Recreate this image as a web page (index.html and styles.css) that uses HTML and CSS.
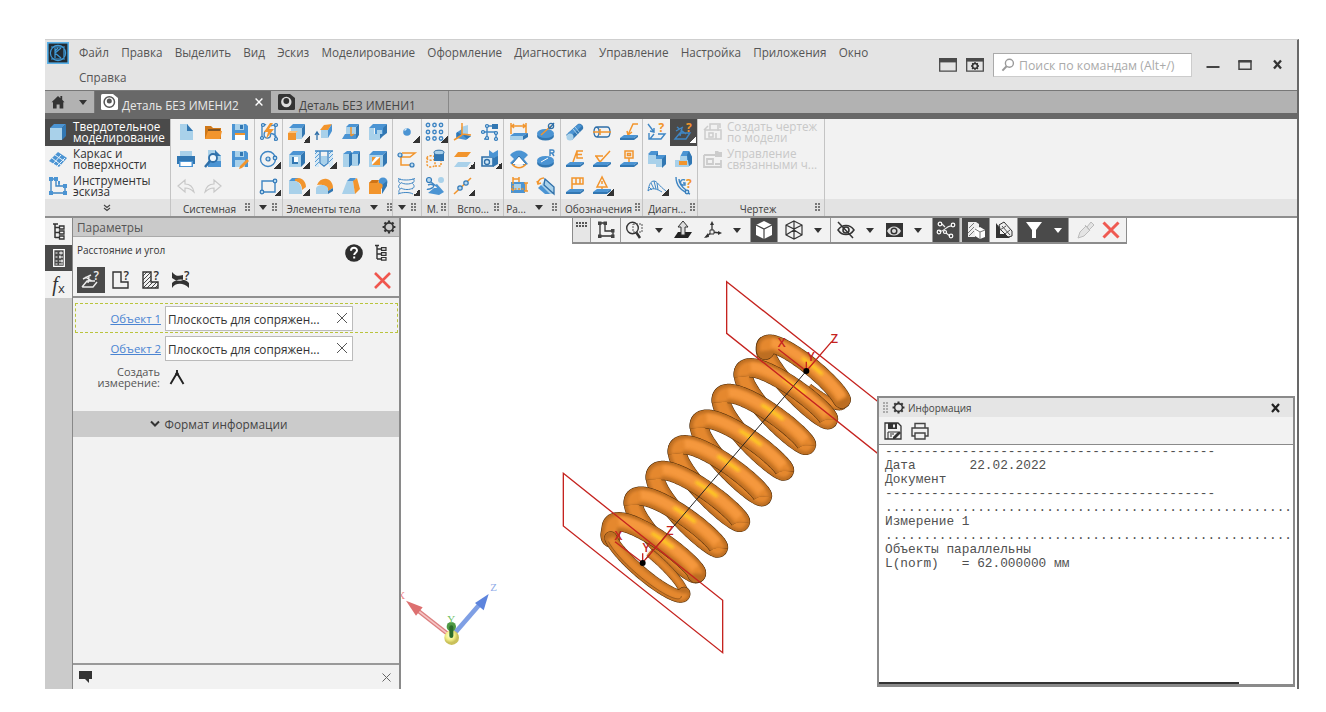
FILE: index.html
```html
<!DOCTYPE html>
<html lang="ru">
<head>
<meta charset="utf-8">
<title>Деталь БЕЗ ИМЕНИ2</title>
<link rel="stylesheet" href="styles.css">
</head>
<body>
<div class="app">
  <header class="titlebar">
    <svg class="logo" viewBox="0 0 22 22"><rect x=".8" y=".8" width="20.4" height="20.4" fill="#222b33" stroke="#58b0e8" stroke-width="1.6"/><g fill="none" stroke="#3f9ad8" stroke-width="1.2"><circle cx="11" cy="11" r="7.6"/><path d="M4 5h14M4 17h14M8 6v10M8 11l6-5M8 11l6 5M11 6l-3 3M17 7v8"/></g></svg>
    <nav class="menu"><span>Файл</span><span>Правка</span><span>Выделить</span><span>Вид</span><span>Эскиз</span><span>Моделирование</span><span>Оформление</span><span>Диагностика</span><span>Управление</span><span>Настройка</span><span>Приложения</span><span>Окно</span><span>Справка</span></nav>
    <div class="winbar">
      <svg class="lay" width="18" height="14" viewBox="0 0 18 14"><path d="M.7 .7h16.6v12.4H.7z" fill="none" stroke="#4a4a4a" stroke-width="1.3"/><path d="M0 0h18v4.4H0z" fill="#4a4a4a"/></svg>
      <svg class="cfg" width="18" height="14" viewBox="0 0 18 14"><path d="M.7 .7h16.6v12.4H.7z" fill="none" stroke="#4a4a4a" stroke-width="1.3"/><path d="M0 0h18v3.6H0z" fill="#4a4a4a"/><circle cx="9" cy="8" r="2.5" fill="none" stroke="#333" stroke-width="1.6"/><path d="M9 4v1.4M9 10.6V12M5 8h1.4M11.6 8H13M6.2 5.2l1 1M11 10l1 1M11.8 5.2l-1 1M7 10l-1 1" stroke="#333" stroke-width="1.3"/></svg>
      <div class="search"><svg width="14" height="14" viewBox="0 0 14 14"><circle cx="8.4" cy="5.2" r="4" fill="none" stroke="#999" stroke-width="1.4"/><path d="M5.6 8.2L1.4 12.6" stroke="#999" stroke-width="2"/></svg><span>Поиск по командам (Alt+/)</span></div>
      <svg class="wmin" width="14" height="14" viewBox="0 0 14 14"><path d="M.5 9h13" stroke="#444" stroke-width="2"/></svg>
      <svg class="wmax" width="14" height="14" viewBox="0 0 14 14"><path d="M1 3.5h12v7.8H1z" fill="none" stroke="#444" stroke-width="1.5"/><path d="M.3 3.2h13.4" stroke="#444" stroke-width="2.4"/></svg>
      <svg class="wx" width="12" height="12" viewBox="0 0 12 12"><path d="M2 1.6l7 8M9 1.6l-7 8" stroke="#333" stroke-width="2.3"/></svg>
    </div>
  </header>

  <div class="tabs">
    <div class="home"><svg width="14" height="14" viewBox="0 0 14 14"><path d="M.5 7.2L7 1l2.4 2.2V1h1.8v3.8l2.3 2.4h-1.2V13.5H8.6V9.4H5.6v4.1H2V7.2z" fill="#333"/></svg><i class="arr"></i></div>
    <div class="tab on"><svg width="17" height="16" viewBox="0 0 17 16"><path d="M1.5 0H12l5 4v10.500q0 1.500-1.500 1.500h-14Q0 16 0 14.500v-13Q0 0 1.500 0z" fill="#fff"/><circle cx="8.300" cy="8" r="5.200" fill="none" stroke="#555" stroke-width="1.500"/><circle cx="8.300" cy="7" r="2.500" fill="#555"/></svg><span>Деталь БЕЗ ИМЕНИ2</span><svg class="tx" width="8" height="8" viewBox="0 0 8 8"><path d="M.6 .6l6.800 6.800M7.400 .6L.6 7.400" stroke="#fff" stroke-width="1.400"/></svg></div>
    <div class="tab"><svg width="17" height="16" viewBox="0 0 17 16"><path d="M1.500 0H12l5 4v10.500q0 1.500-1.500 1.500h-14Q0 16 0 14.500v-13Q0 0 1.500 0z" fill="#333"/><circle cx="8.300" cy="8" r="5.200" fill="#ddd"/><circle cx="8.300" cy="7" r="2.900" fill="#333"/></svg><span>Деталь БЕЗ ИМЕНИ1</span></div>
  </div>

  <div class="ribbon">
    <section class="grp modes">
      <div class="mode on"><svg viewBox="0 0 20 20"><path class="l" d="M2 6h12v12H2z"/><path class="b" d="M2 6l4-4h12l-4 4z"/><path class="d" d="M14 6l4-4v12l-4 4z"/></svg><span>Твердотельное<br>моделирование</span></div>
      <div class="mode"><svg viewBox="0 0 20 20"><path class="b" d="M1 12L10 3l9 6-8 9z"/><path d="M4 9l9 7M7 6l9 6M5 15l8-9M9 17l8-8" stroke="#e8f2fa" stroke-width="1"/></svg><span>Каркас и<br>поверхности</span></div>
      <div class="mode"><svg viewBox="0 0 20 20"><path class="sb" d="M3 3h5v7h9v7H3zM11 7v3"/><path class="b" d="M1 1h4v4H1zM6 1h4v4H6zM1 15h4v4H1zM15 15h4v4h-4zM15 8h4v4h-4zM10 5h2v3h-2z"/></svg><span>Инструменты<br>эскиза</span></div>
      <footer><svg width="8" height="8" viewBox="0 0 8 8"><path d="M1 1l3 2.500L7 1M1 4l3 2.500L7 4" fill="none" stroke="#444" stroke-width="1.100"/></svg></footer>
    </section>

    <section class="grp sys">
      <div class="cells">
        <b><svg viewBox="0 0 20 20"><path class="l" d="M4 2h8v6h5v10H4z"/><path class="d" d="M11 2l6 7h-6z"/></svg></b>
        <b><svg viewBox="0 0 20 20"><path fill="#d07818" d="M2 4h6l2 2h8v11H2z"/><path class="o" d="M2 17l3-8h14l-2 8z"/><path d="M5 8h12" stroke="#333"/></svg></b>
        <b><svg viewBox="0 0 20 20"><path class="b" d="M2 2h14l2 2v14H2z"/><path class="l" d="M5 2h9v6H5z"/><path class="d" d="M10 3h3v4h-3z"/><path fill="#fff" d="M5 11h10v7H5z"/><path class="o" d="M5 11h10v2H5z"/></svg></b>
        <b><svg viewBox="0 0 20 20"><path class="l" d="M4 2h12v6H4z"/><path class="d" d="M1 7h18v8H1z"/><path class="b" d="M3 12h14v6H3z"/><path fill="#fff" d="M4.500 13h11v4h-11z"/></svg></b>
        <b><svg viewBox="0 0 20 20"><path class="l" d="M5 1h8v5h5v12H5z"/><path class="d" d="M12 1l6 6h-6z"/><path class="b" d="M5 12h13v6H5z"/><circle cx="10" cy="9" r="4" fill="#eef6fc" stroke="#2f6fa8" stroke-width="1.800"/><path d="M7 12l-5 6" stroke="#2f6fa8" stroke-width="2.500"/></svg></b>
        <b><svg viewBox="0 0 20 20"><path class="b" d="M2 2h14l2 2v14H2z"/><path class="l" d="M5 2h9v6H5z"/><path class="d" d="M10 3h3v4h-3z"/><path class="l" d="M5 11h10v7H5z"/><path class="o" d="M10 17l7-7 2 2-7 7-3 1z"/></svg></b>
        <b><svg viewBox="0 0 20 20"><path d="M2 10l7-6v4c5 0 8 3 9 8-3-3-5-4-9-4v4z" fill="none" stroke="#c8c8c8" stroke-width="1.200"/></svg></b>
        <b><svg viewBox="0 0 20 20"><path d="M18 10l-7-6v4c-5 0-8 3-9 8 3-3 5-4 9-4v4z" fill="none" stroke="#c8c8c8" stroke-width="1.200"/></svg></b>
      </div>
      <footer><span>Системная</span><i class="grip"></i></footer>
    </section>

    <section class="grp g1">
      <div class="cells">
        <b><svg viewBox="0 0 20 20"><path class="sb" d="M3 15V5c0-3 3-3 4-2M8 8c-4 2-4 9 1 8s0-6 5-4 3 6 1 6M12 4c3-2 5 0 4 3v8"/><circle class="kn" cx="3" cy="16" r="1.500"/><circle class="kn" cx="4" cy="3" r="1.500"/><circle class="kn" cx="17" cy="3" r="1.500"/><circle class="kn" cx="17" cy="17" r="1.500"/><path class="o" d="M11 1L5 10h4l-2 7 8-10h-5l4-6z"/></svg></b>
        <b class="dd"><svg viewBox="0 0 20 20"><circle class="sb" cx="9" cy="10" r="7.500"/><circle class="kn" cx="9" cy="10" r="2"/><circle class="kn" cx="16" cy="9" r="1.800"/></svg></b>
        <b class="dd"><svg viewBox="0 0 20 20"><path class="sb" d="M3 5h13v11H3z"/><circle class="kn" cx="16" cy="5" r="1.800"/><circle class="kn" cx="3" cy="16" r="1.800"/></svg></b>
      </div>
      <footer><i class="arr"></i><i class="grip"></i></footer>
    </section>

    <section class="grp g4">
      <div class="cells">
        <b class="dd"><svg viewBox="0 0 20 20"><path class="l" d="M4 5h11v12H4z"/><path class="b" d="M2 6l4-4h12l-3 4z"/><path class="d" d="M15 6l3-4v10l-3 4z"/><path class="o" d="M1 11h8v7H1z"/><path fill="#fbc27c" d="M1 11l2-2h8l-2 2z"/></svg></b>
        <b><svg viewBox="0 0 20 20"><path class="l" d="M7 8h7v8H7z"/><path class="o" d="M6 8l4-5 8-1-4 6z"/><path class="b" d="M14 8l4-6v7l-4 7z"/><path class="sd" d="M3 18V11M1 13l2-3 2 3"/></svg></b>
        <b><svg viewBox="0 0 20 20"><path class="l" d="M5 5h10v9H5z"/><path class="b" d="M5 5l3-3h10l-3 3zM1 17l3-5h13v3l-2 2z"/><path class="d" d="M15 5l3-3v11l-3 4z"/><path class="so" d="M10 5v9M10 14l3-2"/></svg></b>
        <b><svg viewBox="0 0 20 20"><path class="b" d="M1 6l4-4h14l-3 4z"/><path class="d" d="M15 6l4-4v9l-4 3-4 4V6z"/><path class="l" d="M1 6h5v6h6v6H1z"/><path class="b" d="M7 6h8v6H7z"/><path class="l" d="M9 8h5v4H9z"/></svg></b>
        <b class="dd"><svg viewBox="0 0 20 20"><path class="l" d="M2 6h12v12H2z"/><path class="b" d="M2 6l4-4h12l-4 4z"/><path class="d" d="M14 6l4-4v12l-4 4z"/><path class="d" d="M5 8h6v7H5z"/><path fill="#fff" d="M7 8h4v5H7z"/></svg></b>
        <b class="dd"><svg viewBox="0 0 20 20"><path fill="#d7e9f5" d="M1 2h4v16H1zM15 2h4v16h-4z"/><path d="M1 5l3-3M1 9l4-4M1 13l4-4M1 17l4-4M15 5l3-3M15 9l4-4M15 13l4-4" stroke="#4b94d3" stroke-width=".9"/><path class="sb" d="M6 2v12l4 3 4-3V2M1 2h18"/><path class="l" d="M7 7h6v7l-3 2-3-2z"/></svg></b>
        <b><svg viewBox="0 0 20 20"><path class="b" d="M2 5l4-3h4v3H9v13H2zM10 5l3-3h6l-2 3z"/><path class="l" d="M2 5h6v13H2zM11 5h6v12h-6z"/><path class="d" d="M8 5l3-2v13l-3 2zM17 5l2-3v12l-2 3z"/></svg></b>
        <b><svg viewBox="0 0 20 20"><path class="l" d="M1 6h14v12H1z"/><path class="b" d="M1 6l4-4h14l-4 4z"/><path class="d" d="M15 6l4-4v12l-4 4z"/><path class="o" d="M4 8h8v8H4z"/><path fill="#fff" d="M4 13l4-5h4l-8 8z"/></svg></b>
        <b class="dd"><svg viewBox="0 0 20 20"><path class="b" d="M2 5l3-3h7l-3 3z"/><path class="o" d="M8 3l4-1c5 1 7 5 7 9l-4 3c0-5-2-8-7-9z"/><path class="l" d="M2 18V5h6c5 1 7 5 7 13z"/></svg></b>
        <b><svg viewBox="0 0 20 20"><path class="o" d="M3 9C5 4 9 2 13 3c4 1 6 5 6 9l-5 3c0-5-5-7-11-6z"/><path class="l" d="M2 18v-6c3-5 12-3 12 1v5z"/><path class="d" d="M14 15l5-3v3l-5 3z"/></svg></b>
        <b><svg viewBox="0 0 20 20"><path class="b" d="M6 5l3-3h6l-2 3z"/><path class="l" d="M1 18L6 5h6l2 13z"/><path class="o" d="M12 5l4-3 3 11-5 5z"/></svg></b>
        <b><svg viewBox="0 0 20 20"><circle class="b" cx="15" cy="6" r="4.500"/><path class="d" d="M14 9l5-4v5l-5 8z"/><path class="o" d="M1 7l3-3h6l1 3c4 0 5 4 2 6v5H1z"/><path fill="#cf7417" d="M1 7l3-3h7l-2 3z"/></svg></b>
      </div>
      <footer><span>Элементы тела</span><i class="arr"></i><i class="grip"></i></footer>
    </section>

    <section class="grp g5">
      <div class="cells">
        <b class="dd"><svg viewBox="0 0 20 20"><circle class="b" cx="10" cy="10" r="3.800"/><path d="M7.500 8.500l2-2" stroke="#d8ecf9" stroke-width="1.500"/></svg></b>
        <b><svg viewBox="0 0 20 20"><path class="so" d="M5 4h13l-5 4H4v8h10"/><circle class="kn" cx="3" cy="6" r="2"/><circle class="kn" cx="15" cy="16" r="2"/></svg></b>
        <b class="dd"><svg viewBox="0 0 20 20"><path class="sb thin" d="M1 2.500c3 2 13 2 17 0M3 2.500c-2 2-2 4 1 5M16 2.500c2 2 1 4-1 5M4 6.500c3 2 9 2 12 0M3 8c-2 2-2 4 1 5M16 8c2 2 1 4-1 5M4 12c3 2 9 2 12 0M3 13c-2 2-1 4 0 5M1 18c4-2 12-2 15 0"/></svg></b>
      </div>
      <footer><i class="arr"></i><i class="grip"></i></footer>
    </section>

    <section class="grp g6">
      <div class="cells">
        <b class="dd"><svg viewBox="0 0 20 20"><g class="sb"><circle cx="3" cy="3" r="1.700"/><circle cx="9.500" cy="3" r="1.700"/><circle cx="16" cy="3" r="1.700"/><circle cx="3" cy="10" r="1.700"/><circle cx="9.500" cy="10" r="1.700"/><circle cx="16" cy="10" r="1.700"/><circle cx="3" cy="16.500" r="1.700"/><circle cx="9.500" cy="16.500" r="1.700"/><circle cx="16" cy="16.500" r="1.700"/></g></svg></b>
        <b><svg viewBox="0 0 20 20"><path class="so" stroke-dasharray="2 1.500" d="M2 9c0-3 8-3 8 0v6c0 4-8 4-8 0zM2 9c0 3 8 3 8 0M10 17h6v-5"/><path class="d" d="M9 3h10v9H9z"/><ellipse cx="14" cy="3.500" rx="5" ry="2.300" fill="#a9d0ea" stroke="#2f6fa8"/></svg></b>
        <b><svg viewBox="0 0 20 20"><circle class="kn" cx="4" cy="4" r="2.500"/><circle class="l" cx="16" cy="4" r="3"/><path class="sb" d="M6 6l5 4M3 9c4-2 8 1 4 3s-5 1-5 1"/><path class="b" d="M3 17l6-5h3l-2-3 2-1 7 8-5 3z"/></svg></b>
      </div>
      <footer><span>М.</span><i class="grip"></i></footer>
    </section>

    <section class="grp g7">
      <div class="cells">
        <b><svg viewBox="0 0 20 20"><path class="l" d="M8 5l7-2v9l-7 1z"/><path class="b" d="M3 11l6-4v6l9 1-5 4-10-2z"/><path class="d" d="M9 13l-5-3v5zM9 12l9 2-4 3z"/><path class="so" d="M9 1v12M9 13l-8 5M9 12l9 1"/></svg></b>
        <b><svg viewBox="0 0 20 20"><path class="sb" d="M7 17V4h5M2 10h14M16 10v6M4 17h5"/><path class="d" d="M12 2h6v5h-6z"/><g class="kn"><circle cx="7" cy="4" r="1.500"/><circle cx="3" cy="10" r="1.500"/><circle cx="16" cy="11" r="1.500"/><circle cx="7" cy="16" r="1.500"/><circle cx="16" cy="17" r="1.500"/></g></svg></b>
        <b class="dd"><svg viewBox="0 0 20 20"><path class="o" d="M5 3h13l-4 5H1z"/><path class="l" d="M5 13h13l-4 5H1z"/></svg></b>
        <b class="dd"><svg viewBox="0 0 20 20"><path d="M2 8h11v9H2z" fill="#d3e8f6" stroke="#2f6fa8" stroke-width="1.600"/><circle cx="7" cy="13" r="2.500" class="sd"/><path class="b" d="M9 1l4 3 5-3v7l-5 1-4-2z"/><path class="d" d="M13 9l5-2v8l-5 3z"/></svg></b>
        <b class="dd"><svg viewBox="0 0 20 20"><path class="so" d="M1 18L18 2"/><circle class="kn" cx="7" cy="12" r="2.200"/><circle class="kn" cx="13" cy="7" r="2.200"/></svg></b>
      </div>
      <footer><span>Вспо...</span><i class="grip"></i></footer>
    </section>

    <section class="grp g8">
      <div class="cells">
        <b><svg viewBox="0 0 20 20"><path class="so" d="M2 1v11M17 1v11M3 4h13M5 2L3 4l2 2M14 2l2 2-2 2"/><path class="l" d="M1 14h13v4H1z"/><path class="b" d="M1 14l4-3h14l-5 3z"/><path class="d" d="M14 14l5-3v4l-5 3z"/></svg></b>
        <b><svg viewBox="0 0 20 20"><ellipse class="d" cx="9.500" cy="14" rx="8.500" ry="4.500"/><ellipse class="b" cx="9.500" cy="11.500" rx="8.500" ry="4.500"/><path class="so" d="M5 13l10-9"/><circle cx="15" cy="4" r="2.600" class="sd"/><path class="sd" d="M13 7l5-6"/></svg></b>
        <b><svg viewBox="0 0 20 20"><path class="b" d="M1 6c5-6 13-6 18 0l-4 4 4 5-4 2-5-7-5 7-4-3 4-4z"/><path d="M3 15L10 7l7 8" fill="#fff" stroke="#2f6fa8"/><path class="so" d="M3 15c4 5 10 5 14 0"/></svg></b>
        <b><svg viewBox="0 0 20 20"><ellipse class="d" cx="9.500" cy="14" rx="8.500" ry="4.500"/><ellipse class="b" cx="9.500" cy="11.500" rx="8.500" ry="4.500"/><path d="M5 13l7-4" stroke="#fff"/><path class="sb" d="M14 7V1h2.500c2 0 2 3 0 3H14M16 4l2 3"/></svg></b>
        <b><svg viewBox="0 0 20 20"><path class="b" d="M2 6h14v11H2z"/><path class="l" d="M5 8h7v6H5z"/><path class="so" d="M4 1v5M10 1v5M4 3h6M15 7h4M15 15h4M17 7v8"/><path class="so" stroke-dasharray="2 1.500" d="M4 6v11M2 13h13"/></svg></b>
        <b><svg viewBox="0 0 20 20"><path class="l" d="M9 3l9 8v7h-5L5 10z"/><path class="b" d="M5 9l9 9H9L2 12z"/><path class="sd" d="M9 3l9 8v7l-10-9z"/><path class="so" d="M2 7c0-3 3-5 6-5M1 5l1 3 3-1"/></svg></b>
      </div>
      <footer><span>Ра...</span><i class="arr"></i><i class="grip"></i></footer>
    </section>

    <section class="grp g9">
      <div class="cells">
        <b><svg viewBox="0 0 20 20"><path class="d" d="M1 13L13 2c3-1 6 2 5 5L7 18z"/><path class="b" d="M3 11L14 2l3 2L6 14z"/><circle class="l" cx="5" cy="15" r="3.500"/><path d="M8 7l5 6M10 5l5 6" stroke="#a9d0ea"/></svg></b>
        <b><svg viewBox="0 0 20 20"><path class="sd" d="M5 5h10c2 0 3 2 3 5s-1 5-3 5H5c-2 0-3-2-3-5s1-5 3-5zM5 5c3 2 3 8 0 10"/><path class="so" d="M1 10h18M8 7v6"/></svg></b>
        <b><svg viewBox="0 0 20 20"><path class="so" d="M19 2h-5L9 13M8 9l1 4 4-3"/><path class="b" d="M1 16l4-3h14l-4 3z"/><path class="d" d="M1 16h14l4-3v2l-4 3H1z"/></svg></b>
        <b><svg viewBox="0 0 20 20"><path class="so" d="M8 13l4-11v7M18 2h-6v7h6M12 5.500h5"/><path class="b" d="M1 16l4-3h14l-4 3z"/><path class="d" d="M1 16h14l4-3v2l-4 3H1z"/></svg></b>
        <b><svg viewBox="0 0 20 20"><path class="so" d="M3 7h8M4 7l4 6 10-11"/><path class="b" d="M1 16l4-3h14l-4 3z"/><path class="d" d="M1 16h14l4-3v2l-4 3H1z"/></svg></b>
        <b><svg viewBox="0 0 20 20"><path class="so" d="M6 2h8v7H6zM10 9v5M8.500 4.500h3v2h-3z"/><path class="b" d="M1 16l4-3h14l-4 3z"/><path class="d" d="M1 16h14l4-3v2l-4 3H1z"/></svg></b>
        <b><svg viewBox="0 0 20 20"><path class="so" d="M7 13V2h11v6H7M11 2v6M15 2v6"/><path class="b" d="M1 16l4-3h14l-4 3z"/><path class="d" d="M1 16h14l4-3v2l-4 3H1z"/></svg></b>
        <b class="dd"><svg viewBox="0 0 20 20"><path class="so" d="M10 1L5 11h10zM10 5v3M10 11v3"/><path class="b" d="M1 16l4-3h14l-4 3z"/><path class="d" d="M1 16h14l4-3v2l-4 3H1z"/></svg></b>
      </div>
      <footer><span>Обозначения</span><i class="grip"></i></footer>
    </section>

    <section class="grp g10">
      <div class="cells">
        <b><svg viewBox="0 0 20 20"><path class="sb" d="M1 2l6 8M7 6v4l-4-1M2 11v6h12l4-5h-7M3 17l4-5"/><text class="q" x="11.500" y="10">?</text></svg></b>
        <b class="dd on"><svg viewBox="0 0 20 20"><path class="sb" d="M3 5l9 7M2 9l7-4M1 17l5-6h10l-4 6zM8 6l-2 8"/><text class="q" x="12" y="10">?</text></svg></b>
        <b><svg viewBox="0 0 20 20"><path class="b" d="M1 5l3-3h7v4h8v9l-4 3z"/><path class="l" d="M1 6h8v4h6v8H9v-3H1z"/><path class="d" d="M9 6l2-3v4H9zM15 10l4-4v9l-4 4z"/></svg></b>
        <b><svg viewBox="0 0 20 20"><path class="b" d="M6 8l3-6h6l3 6v7l-4 3z"/><path class="l" d="M6 7h7v4h2v7H1v-7h5z"/><path class="d" d="M13 6l2-4 3 6v6l-3 3z"/><path class="o" d="M5 12h8v4H5z"/></svg></b>
        <b class="dd"><svg viewBox="0 0 20 20"><path class="sb thin" d="M1 15c1-7 3-10 6-10s5 5 12 10M1 15c4-4 9-2 14 1M4 7l3 6M7 5l2 8M10 7l1 7M2 11l3 3"/></svg></b>
        <b><svg viewBox="0 0 20 20"><path class="sb" d="M2 1c0 8 5 14 14 17M5 3c0 5 3 8 7 11M11 4c-5-2-6 5-2 5h2V7H9"/><circle class="kn" cx="13" cy="16" r="1.800"/><text class="q" x="12" y="12">?</text></svg></b>
      </div>
      <footer><span>Диагн...</span><i class="grip"></i></footer>
    </section>

    <section class="grp draw">
      <div class="cmds">
        <div class="cmd"><svg viewBox="0 0 20 20"><path d="M2 8h16v9H2zM7 8V2h10v4M6 11h4v4H6zM13 11v6M1 8l4-4M15 3v6" fill="none" stroke="#ccc" stroke-width="1.500"/></svg><span>Создать чертеж<br>по модели</span></div>
        <div class="cmd"><svg viewBox="0 0 20 20"><path d="M1 6h11M1 6v12h17v-7M4 10h6v5H4zM12 15h6" fill="none" stroke="#ccc" stroke-width="1.800"/><path d="M12 2h3l1 1h3v5h-7z" fill="#ccc"/></svg><span>Управление<br>связанными ч...</span></div>
      </div>
      <footer><span>Чертеж</span><i class="grip"></i></footer>
    </section>
    <section class="grp rest"><footer></footer></section>
  </div>

  <main class="work">
    <aside class="rail">
      <div><svg width="14" height="17" viewBox="0 0 14 17"><path d="M1 1h5M3 1v14M3 4.500h5M3 9.500h5M3 14.500h5" fill="none" stroke="#333" stroke-width="1.500"/><path d="M7.500 3h4.500v3H7.500zM7.500 8h4.500v3H7.500zM7.500 13h4.500v3H7.500z" fill="none" stroke="#333" stroke-width="1.300"/></svg></div>
      <div class="on"><svg width="12" height="18" viewBox="0 0 12 18"><path d="M.7 .7h10.600v16.600H.7z" fill="none" stroke="#fff" stroke-width="1.300"/><path d="M2.500 4h2M2.500 8h2M2.500 12h2M6 4h4M6 8h4M6 12h4M2.500 15h2M6 15h4M8 2.500v3M7 6.500v3M9 10.500v3" stroke="#fff" stroke-width="1.100"/></svg></div>
      <div class="fx"><i>f</i><sub>x</sub></div>
    </aside>
    <section class="panel">
      <div class="phead"><span>Параметры</span><svg width="14" height="14" viewBox="0 0 14 14"><circle cx="7" cy="7" r="4.200" fill="none" stroke="#333" stroke-width="1.700"/><g stroke="#333" stroke-width="2.200"><path d="M7 .6v2M7 11.400v2M.6 7h2M11.400 7h2M2.500 2.500l1.400 1.400M10.100 10.100l1.400 1.400M11.500 2.500l-1.400 1.400M3.900 10.100l-1.400 1.400"/></g></svg></div>
      <div class="ptitle"><span>Расстояние и угол</span>
        <svg width="18" height="18" viewBox="0 0 18 18"><circle cx="9" cy="9" r="8.800" fill="#2e2e2e"/><path d="M6 6.800C6 2.800 12 3 12 6.500c0 2.200-2.800 2.300-2.800 4.500M9.200 12.500v2" fill="none" stroke="#fff" stroke-width="2"/></svg>
        <svg class="tree" width="13" height="17" viewBox="0 0 13 17"><path d="M2 1v14M2 5h5M2 10h5M2 15h5M0 1.500h4" fill="none" stroke="#333" stroke-width="1.400"/><path d="M6.500 3.700H11v2.600H6.500zM6.500 8.700H11v2.600H6.500zM6.500 13.500H11v2.600H6.500z" fill="none" stroke="#333" stroke-width="1.200"/></svg>
      </div>
      <div class="ptools">
        <b class="on"><svg viewBox="0 0 20 20"><path d="M4 7l7 4M2 9l8-4M1 17l5-6h8M1 17h11l4-5M8 7l-1 6" fill="none" stroke="#eee" stroke-width="1.400"/><text x="12.500" y="10" fill="#eee">?</text></svg></b>
        <b><svg viewBox="0 0 20 20"><path d="M2 2h8v10h7v6H2z" fill="none" stroke="#333" stroke-width="1.400"/><text x="12.500" y="10" fill="#333">?</text></svg></b>
        <b><svg viewBox="0 0 20 20"><path d="M2 2h8v10h7v6H2z" fill="none" stroke="#333" stroke-width="1.400"/><path d="M2 6l4-4M2 10l8-8M2 14l8-8M2 18l8-8M6 18l6-6M10 18l6-6M14 18l3-3" stroke="#333" stroke-width=".9"/><text x="12.500" y="10" fill="#333">?</text></svg></b>
        <b><svg viewBox="0 0 20 20"><path d="M1 2c4 5 7 4 11 3v5C7 12 4 10 1 8zM1 18c3-5 11-6 17 0v-5C13 8 5 9 1 13z" fill="#333"/><text x="13" y="10" fill="#333">?</text></svg></b>
        <svg class="cancel" width="17" height="17" viewBox="0 0 17 17"><path d="M1 1l15 15M16 1L1 16" stroke="#f0564e" stroke-width="2.600"/></svg>
      </div>
      <div class="pbody">
        <div class="row sel"><a>Объект 1</a><div class="field"><span>Плоскость для сопряжен...</span><svg width="10" height="10" viewBox="0 0 10 10"><path d="M0 0l10 10M10 0L0 10" stroke="#555"/></svg></div></div>
        <div class="row"><a>Объект 2</a><div class="field"><span>Плоскость для сопряжен...</span><svg width="10" height="10" viewBox="0 0 10 10"><path d="M0 0l10 10M10 0L0 10" stroke="#555"/></svg></div></div>
        <div class="make"><span>Создать<br>измерение:</span><svg width="16" height="18" viewBox="0 0 16 18"><path d="M8 2v4M8 5L1.500 16M8 5l6.500 11" fill="none" stroke="#222" stroke-width="1.900"/><circle cx="8" cy="6" r="1.800" fill="#222"/></svg></div>
        <div class="fmt"><svg width="10" height="8" viewBox="0 0 10 8"><path d="M1 1.500l4 4 4-4" fill="none" stroke="#333" stroke-width="2"/></svg><span>Формат информации</span></div>
      </div>
      <div class="pfoot"><svg width="13" height="12" viewBox="0 0 13 12"><path d="M0 0h13v8h-3v4L6 8H0z" fill="#333"/></svg><svg width="9" height="9" viewBox="0 0 9 9"><path d="M.5 .5l8 8M8.500 .5l-8 8" stroke="#666"/></svg></div>
    </section>

    <section class="view">
      <svg class="scene" viewBox="401 218 896 471">
        <defs><filter id="soft" x="-20%" y="-20%" width="140%" height="140%"><feGaussianBlur stdDeviation="5"/></filter>
        <radialGradient id="ball" cx=".4" cy=".35"><stop offset="0" stop-color="#ffffd8"/><stop offset=".6" stop-color="#f3ee86"/><stop offset="1" stop-color="#c9c05a"/></radialGradient></defs>
        <g transform="translate(550 270) scale(.33333)">
          <g id="spring"></g>
          <path d="M278 878L769 303" stroke="#222" stroke-width="3"/>
          <g fill="none" stroke="#c5231f" stroke-width="4">
            <path d="M530 35L1009 415V571L530 190zM40 610L518 991V1148L40 768z"/>
            <path d="M769 303L685 238M769 303V275M769 303L845 215M278 878L195 815M278 878V850M278 878L350 795"/>
          </g>
          <circle cx="769" cy="303" r="9"/><circle cx="278" cy="879" r="9"/>
          <g class="axl"><text x="695" y="231">X</text><text x="783" y="272">Y</text><text x="853" y="218">Z</text><text x="205" y="810">X</text><text x="289" y="847">Y</text><text x="360" y="795">Z</text></g>
        </g>
        <g transform="translate(390 570) scale(.33333)">
          <path d="M176 194L84 122" stroke="#dc7f7f" stroke-width="13"/><path d="M176 194L84 122" stroke="#f6c6c6" stroke-width="5"/>
          <path d="M48 92l50 20-20 25z" fill="#dd7070"/>
          <path d="M192 192L268 104" stroke="#7f9fe4" stroke-width="14"/><path d="M296 72l-41 27 26 22z" fill="#5d84dd"/>
          <circle cx="185" cy="203" r="22" fill="url(#ball)"/><circle cx="184" cy="170" r="14" fill="#4f9a45"/><path d="M184 172v26" stroke="#2c6b2b" stroke-width="12" stroke-linecap="round"/>
          <g class="tri"><text x="34" y="88" fill="#e88">X</text><text x="184" y="158" fill="#6fbf62">Y</text><text x="311" y="64" fill="#8fabe8">Z</text></g>
        </g>
      </svg>

      <div class="vtools">
        <div class="seg gripseg"><i></i></div>
        <div class="seg w30"><svg viewBox="0 0 20 20"><path d="M4 3v13h13V11H9V3z" fill="none" stroke="#333" stroke-width="1.300"/><path d="M2 1.500h3.500V5H2zM7.500 1.500H11V5H7.500zM2 14.500h3.500V18H2zM15 14.500h3.500V18H15zM15 9h3.500v3.500H15z" fill="#444"/></svg></div>
        <div class="seg w130"><svg viewBox="0 0 20 20"><circle cx="7.500" cy="8" r="5.800" fill="none" stroke="#333" stroke-width="1.400"/><path d="M11 12l4 6" stroke="#333" stroke-width="2.500"/><path d="M8 4h9v8H8z" fill="none" stroke="#555" stroke-dasharray="2 1"/></svg><i class="arr"></i><svg viewBox="0 0 20 20"><path d="M5 12h14l-4 6H1z" fill="#222"/><path d="M8 15V7H5l5-6 5 6h-3v8z" fill="#ddd" stroke="#333"/></svg><svg viewBox="0 0 20 20"><path d="M9 12V3M9 12l8 1M9 12l-6 5" stroke="#333" stroke-width="1.300"/><path d="M7 5l2-4 2 4zM15 11l4 2-4 2zM5 13l-4 5 5-1z" fill="#333"/><path d="M7 10h4v4H7z" fill="#eee" stroke="#333"/></svg><i class="arr"></i></div>
        <div class="seg dk w27"><svg viewBox="0 0 20 20"><path d="M10 1l8 4v10l-8 4-8-4V5z" fill="#fff"/><path d="M2 5l8 4 8-4M10 9v10" fill="none" stroke="#444" stroke-width="1.200"/></svg></div>
        <div class="seg w53"><svg viewBox="0 0 20 20"><path d="M10 1l8 4v10l-8 4-8-4V5zM2 5l8 4 8-4M10 9v10M10 1v9M2 15l8-5 8 5" fill="none" stroke="#333" stroke-width="1.200"/></svg><i class="arr"></i></div>
        <div class="seg w102"><svg viewBox="0 0 20 20"><path d="M2 10c4-6 12-6 16 0-4 6-12 6-16 0zM2 2l15 16" fill="none" stroke="#333" stroke-width="1.500"/><circle cx="10" cy="10" r="3" fill="none" stroke="#333" stroke-width="1.600"/></svg><i class="arr"></i><svg viewBox="0 0 20 20"><path d="M2 3h17v14H2z" fill="#333"/><path d="M3 11c3-6 11-6 14 0-3 6-11 6-14 0z" fill="#ddd"/><circle cx="10" cy="11" r="2.800" fill="#ddd" stroke="#333" stroke-width="1.500"/></svg><i class="arr"></i></div>
        <div class="seg dk w27"><svg viewBox="0 0 20 20"><path d="M3 11c5 2 7-6 13-5M6 4l3 3M10 13l4 3" fill="none" stroke="#eee" stroke-width="1.200"/><g fill="none" stroke="#fff" stroke-width="1.200"><circle cx="4" cy="4" r="1.800"/><circle cx="3" cy="12" r="1.800"/><circle cx="17" cy="5" r="1.800"/><circle cx="9" cy="12" r="1.500"/><circle cx="15" cy="16" r="1.800"/></g></svg></div>
        <div class="seg dk w30 b2"><svg viewBox="0 0 20 20"><path d="M2 2h8l3 2v5H9v8H2z" fill="#eee"/><path d="M9 9l5-2 5 3v7l-5 2-5-3z" fill="#fff"/><path d="M9 9l5 3 5-2M14 12v7M3 8l5-5M2 13l6-6M3 16l5-5" stroke="#777" fill="none"/></svg></div>
        <div class="seg w28"><svg viewBox="0 0 20 20"><path d="M2 3v15h14l-4-4H6V8z" fill="#333"/><path d="M5 5l5-3 8 9v5l-4 1-8-8z" fill="#eee" stroke="#333"/><path d="M8 6l8 9M12 6l-6 4M16 10l-5 4" stroke="#555"/></svg></div>
        <div class="seg dk w51"><svg viewBox="0 0 20 20"><path d="M2 2h16l-6 8v8H8v-8z" fill="#fff"/></svg><i class="arr"></i></div>
        <div class="seg w58"><svg viewBox="0 0 20 20"><path d="M3 18l2-6 6-6 4 4-6 6zM10 5l5 6M12 7l4-5 3 3-4 4" fill="#e4e4e4" stroke="#bbb"/></svg><svg viewBox="0 0 20 20"><path d="M2.500 2.500l15 15M17.500 2.500l-15 15" stroke="#ef5a52" stroke-width="3"/></svg></div>
      </div>

      <div class="info">
        <div class="ihead"><i class="dots"></i><svg width="13" height="13" viewBox="0 0 14 14"><circle cx="7" cy="7" r="4.200" fill="none" stroke="#333" stroke-width="1.700"/><g stroke="#333" stroke-width="2.200"><path d="M7 .6v2M7 11.400v2M.6 7h2M11.400 7h2M2.500 2.500l1.400 1.400M10.100 10.100l1.400 1.400M11.500 2.500l-1.400 1.400M3.900 10.100l-1.400 1.400"/></g></svg><span>Информация</span><svg class="ix" width="11" height="10" viewBox="0 0 11 10"><path d="M2 1l7 8M9 1L2 9" stroke="#222" stroke-width="2.200"/></svg></div>
        <div class="itools"><svg width="18" height="18" viewBox="0 0 18 18"><path d="M1 1h13l3 3v13H1z" fill="none" stroke="#333" stroke-width="1.300"/><path d="M4 1h9v6H4z" fill="#333"/><path d="M9 2.500h2v3H9z" fill="#eee"/><path d="M4 10h10M4 10v7M6 12h4M6 14h2" stroke="#333" stroke-width="1.100"/><path d="M9 15l6-6 2 2-6 6H9z" fill="#333"/></svg><svg width="18" height="18" viewBox="0 0 18 18"><path d="M4 6V1.500h10V6M4 14H1V6h16v8h-3M4 11h10v6H4z" fill="none" stroke="#444" stroke-width="1.400"/></svg></div>
<pre class="log">-------------------------------------------
Дата       22.02.2022
Документ
-------------------------------------------
.....................................................
Измерение 1
.....................................................
Объекты параллельны
L(norm)   = 62.000000 мм</pre>
        <div class="hbar"></div>
      </div>
    </section>
  </main>
</div>
<script src="spring.js"></script>
</body>
</html>
```
FILE: styles.css
```css
* { box-sizing: border-box; }
body { margin: 0; background: #fff; font-family: "Open Sans", "Noto Sans", sans-serif; color: #444; width: 1326px; height: 712px; overflow: hidden; }
.app { margin: 39px 0 0 45px; width: 1254px; height: 650px; border-top: 1px solid #cfcfcf; border-right: 2px solid #686868; display: flex; flex-direction: column; }
svg { flex: none; display: block; overflow: visible; }
i { font-style: normal; }

.titlebar { height: 50px; background: #e4e4e4; display: flex; }
.logo { width: 22px; height: 22px; margin: 2px 0 0 2px; }
.menu { margin-left: 10px; width: 830px; display: flex; flex-wrap: wrap; column-gap: 12.200px; align-content: flex-start; font-size: 11.700px; line-height: 25px; color: #555; white-space: nowrap; }
.winbar { margin-left: -15px; height: 50px; display: flex; align-items: center; }
.winbar .cfg { margin-left: 9px; }
.winbar .lay { margin-left: 45px; }
.search { width: 199px; height: 24px; margin-left: 9px; border: 1px solid #ccc; border-top-color: #aaa; border-left-color: #aaa; background: #fff; display: flex; align-items: center; padding-left: 7px; gap: 4px; font-size: 12.300px; color: #aaa; white-space: nowrap; }
.wmin { margin-left: 14px; }
.wmax { margin-left: 18px; }
.wx { margin-left: 20px; }

.tabs { height: 29px; background: #b2b2b2; border-top: 1px solid #777; border-bottom: 6px solid #686868; display: flex; font-size: 11.700px; color: #444; }
.home { width: 50px; display: flex; align-items: center; padding-left: 6px; gap: 14px; border-right: 1px solid #777; }
.tab { display: flex; align-items: center; padding-left: 7px; width: 178px; white-space: nowrap; }
.tab span { margin: 6px 0 0 4px; line-height: 16px; }
.tab.on { background: #686868; color: #e8e8e8; width: 176px; padding-left: 6px; }
.tab .tx { margin-left: auto; margin-right: 8px; }
.tab:last-child { border-right: 1px solid #888; }
.arr { width: 0; height: 0; border: 4.500px solid transparent; border-top: 5px solid #333; border-bottom: 0; flex: none; }

.ribbon { height: 99px; background: #f2f2f2; border-bottom: 2px solid #8e8e8e; display: flex; }
.grp { border-right: 1px solid #c4c4c4; display: flex; flex-direction: column; }
.grp footer { margin-top: auto; height: 17px; background: #e3e3e3; display: flex; align-items: center; justify-content: center; font-size: 10.100px; white-space: nowrap; color: #3c3c3c; padding: 0 4px 0 3px; }
.grp footer span { flex: 1; text-align: center; padding-top: 2px; }
.grip { width: 5px; height: 9px; flex: none; background: repeating-linear-gradient(#777 0 2px, transparent 2px 3px); mask: linear-gradient(90deg, #000 40%, transparent 40% 60%, #000 60%); }
.modes { width: 126px; }
.mode { height: 26.670px; display: flex; align-items: center; padding-left: 3px; gap: 5px; font-size: 11.700px; line-height: 11px; color: #333; white-space: nowrap; }
.mode.on { background: #4a4a4a; color: #fff; }
.mode svg, .cells svg { width: 20px; height: 20px; }
.cells { display: grid; grid-template-columns: repeat(auto-fill, 27px); grid-auto-rows: 26.670px; justify-content: center; }
.cells b { position: relative; display: flex; align-items: center; justify-content: center; }
.cells b.on { background: #4a4a4a; }
.dd::after { content: ""; position: absolute; right: 1px; bottom: 3px; width: 7px; height: 7px; background: linear-gradient(135deg, transparent 50%, #333 50%); }
.dd.on::after { background: linear-gradient(135deg, transparent 50%, #fff 50%); }
.sys { width: 84px; }
.g1 { width: 28px; }
.g4 { width: 110px; }
.g5 { width: 29px; }
.g6 { width: 27px; }
.g7 { width: 55px; }
.g8 { width: 57px; }
.g9 { width: 82px; }
.g10 { width: 55px; }
.g6 .cells { grid-template-columns: 27px; }
.g1 footer, .g5 footer { gap: 5px; }
.g4 footer, .g8 footer { gap: 9px; }
.grp.g4 footer { padding: 0 2px 0 5px; }
.g6 footer { padding: 0 2px; }
.grp.g9 footer, .grp.g10 footer { padding: 0 2px 0 1px; }
.draw { width: 127px; }
.cmds { display: flex; flex-direction: column; }
.cmd { height: 26.670px; display: flex; align-items: center; gap: 4px; padding-left: 5px; color: #c8c8c8; font-size: 11.700px; line-height: 11px; white-space: nowrap; }
.cmd svg { width: 20px; height: 20px; }
.rest { flex: 1; border-right: 0; }
.b { fill: #4b94d3; }
.l { fill: #a9d1ea; }
.d { fill: #3277b2; }
.o { fill: #f2952d; }
.sb { fill: none; stroke: #3f86c4; stroke-width: 1.400; }
.sb.thin { stroke-width: 1; }
.sd { fill: none; stroke: #2f6fa8; stroke-width: 1.300; }
.so { fill: none; stroke: #f2952d; stroke-width: 1.500; }
.kn { fill: #b9daf0; stroke: #3279b8; stroke-width: 1.200; }
.q { fill: #f2952d; font: bold 12px "Open Sans", sans-serif; }

.work { height: 471px; display: flex; }
.rail { width: 28px; background: #cbcbcb; border-right: 1px solid #888; display: flex; flex-direction: column; }
.rail div { height: 26.500px; background: #f2f2f2; display: flex; align-items: center; justify-content: center; }
.rail .on { background: #4a4a4a; }
.rail .fx { font: 20px "Liberation Serif", serif; color: #333; }
.fx i { font-style: italic; }
.fx sub { font: 13px "Open Sans", sans-serif; padding-top: 8px; }
.panel { width: 328px; border-right: 2px solid #8a8a8a; background: #f2f2f2; display: flex; flex-direction: column; }
.phead { height: 19px; background: #cacaca; border-bottom: 1px solid #aaa; display: flex; align-items: center; justify-content: space-between; padding: 0 3px 0 4px; font-size: 11.800px; color: #555; }
.ptitle { height: 29px; display: flex; align-items: center; padding: 2px 11px 0 4px; font-size: 10px; color: #333; }
.ptitle span { flex: 1; padding-bottom: 6px; }
.ptitle .tree { margin-left: 12px; }
.ptools { height: 32px; padding: 1px 8px 0 4px; display: flex; align-items: flex-start; gap: 2px; border-bottom: 2px solid #909090; }
.ptools b { width: 28px; height: 26px; display: flex; align-items: center; justify-content: center; }
.ptools b svg { width: 20px; height: 20px; }
.ptools text { font: 600 12px "Open Sans", sans-serif; }
.ptools .on { background: #4a4a4a; }
.cancel { margin: 5px 0 0 auto; }
.pbody { flex: 1; padding-top: 5px; }
.row { height: 30px; margin: 0 1px 0 2px; border: 1px dashed transparent; display: flex; align-items: center; gap: 4px; }
.row.sel { border-color: #b9c43c; }
.row a { width: 85px; text-align: right; font-size: 11.400px; color: #4a84d2; text-decoration: underline; }
.field { width: 188px; height: 25px; border: 1px solid #bbb; background: #fff; display: flex; align-items: center; justify-content: space-between; padding: 2px 5px 0 2px; font-size: 11.800px; color: #333; white-space: nowrap; }
.field svg { margin-top: -3px; }
.make { display: flex; align-items: center; height: 30px; gap: 9px; color: #555; font-size: 11px; line-height: 11.500px; text-align: right; margin-top: -1px; }
.make span { width: 87px; }
.fmt { margin-top: 19px; height: 26px; background: #cbcbcb; display: flex; align-items: center; justify-content: center; padding-right: 35px; gap: 5px; font-size: 11.800px; }
.pfoot { height: 26px; border-top: 2px solid #999; display: flex; align-items: center; justify-content: space-between; padding: 0 8px 0 6px; }

.view { flex: 1; position: relative; background: #fff; overflow: hidden; }
.scene { position: absolute; inset: 0; width: 896px; height: 471px; }
.axl text { font: 600 38px "Open Sans", sans-serif; fill: #c5231f; text-anchor: middle; }
.tri text { font: 33px "Liberation Serif", serif; text-anchor: middle; }
.vtools { position: absolute; left: 171px; top: -1px; height: 27px; width: 555px; background: #f2f2f2; border: 1px solid #8c8c8c; border-bottom-width: 2px; display: flex; }
.seg { display: flex; align-items: center; justify-content: center; gap: 10px; border-right: 1px solid #999; }
.seg svg { width: 20px; height: 20px; }
.seg.dk { background: #4a4a4a; }
.dk .arr { border-top-color: #fff; }
.gripseg { width: 18px; align-items: flex-start; background: #e6e6e6; }
.gripseg i { width: 12px; height: 5px; margin-top: 4px; background: radial-gradient(circle at 1px 1px, #555 1px, transparent 1px) 0 0 / 3px 3px; }
.w27 { width: 27px; }
.w28 { width: 28px; }
.w30 { width: 30px; }
.w51 { width: 51px; }
.w53 { width: 53px; }
.w58 { flex: 1; border: 0; gap: 6px; }
.w102 { width: 102px; }
.w130 { width: 130px; }
.seg.w53 { padding-right: 3px; }
.seg.w130, .seg.w102 { padding-right: 5px; }
.b2 { border-left: 2px solid #ccc; }

.info { position: absolute; left: 476px; top: 178px; width: 418px; height: 291px; border: 2px solid #8a8a8a; border-bottom-width: 3px; background: #fff; display: flex; flex-direction: column; }
.ihead { height: 19px; background: #e5e5e5; display: flex; align-items: center; font-size: 9.900px; padding-left: 4px; gap: 3px; flex: none; }
.dots { width: 5px; height: 12px; background: radial-gradient(circle at 1px 1px, #aaa 1px, transparent 1px) 0 0 / 3px 3px; margin-right: 1px; }
.ix { margin: 0 12px 0 auto; }
.itools { height: 28px; background: #f2f2f2; border-bottom: 1px solid #8a8a8a; display: flex; align-items: center; gap: 9px; padding-left: 5px; flex: none; }
.log { margin: 0; flex: 1; padding: 0 0 0 6px; overflow: hidden; font: 12.800px/14px "Liberation Mono", monospace; color: #505050; }
.hbar { width: 360px; height: 2px; background: #333; flex: none; }
```
FILE: spring.js
```js
// Compression spring: helix projected onto the screen, one tube stroke per half turn.
const NS = 'http://www.w3.org/2000/svg';
const host = document.getElementById('spring');
const U = [-111, -88], V = -40, START = [295, 858], PITCH = [66, -77];

function centre(turn) {
  if (turn < 0) return [291, 882];
  if (turn > 7) {
    const k = Math.min((turn - 7) * 2, 1);
    return [757 + 10 * k, 319 - 10 * k];
  }
  return [START[0] + PITCH[0] * turn, START[1] + PITCH[1] * turn];
}

function arc(from, to, dx = 0, dy = 0) {
  let d = '';
  for (let i = 0; i <= 60; i++) {
    const turn = from + (to - from) * i / 60, a = turn * 2 * Math.PI, c = centre(turn);
    const x = c[0] + Math.cos(a) * U[0] + dx;
    const y = c[1] + Math.cos(a) * U[1] + Math.sin(a) * V + dy;
    d += (i ? 'L' : 'M') + x.toFixed(1) + ' ' + y.toFixed(1);
  }
  return d;
}

function stroke(d, color, width, soft, cap = 'butt') {
  const p = document.createElementNS(NS, 'path');
  p.setAttribute('d', d);
  p.setAttribute('fill', 'none');
  p.setAttribute('stroke', color);
  p.setAttribute('stroke-width', width);
  p.setAttribute('stroke-linecap', cap);
  p.setAttribute('stroke-linejoin', 'round');
  if (soft) p.setAttribute('filter', 'url(#soft)');
  host.appendChild(p);
}

function tube(from, to, w, cap) {
  stroke(arc(from, to), '#4d2c0b', w + 3, false, cap);
  stroke(arc(from, to), '#bd6e22', w, false, cap);
  stroke(arc(from, to), '#e5882e', w * 0.66, true);
}

// rear halves first, then the halves that face the viewer
tube(7.49, 7.74, 28);
for (let k = 6; k >= 0; k--) tube(k + 0.46, k + 1.04, 54);
for (let k = 7; k >= 0; k--) {
  if (k === 7) tube(6.97, 7.47, 52, 'round');
  else tube(k - 0.03, k + 0.52, 55, k ? 'butt' : 'round');
  stroke(arc(k + 0.08, k + 0.46, 3, -3), '#f5983c', 26, true);
  stroke(arc(k + 0.24, k + 0.32, 4, -3), '#ffd21c', 9, true, 'round');
}
// ground end ring
tube(-0.74, -0.5, 24);
tube(-0.5, -0.03, 36, 'round');
stroke(arc(-0.5, -0.04, -8, 8), '#7a4512', 2);
```
